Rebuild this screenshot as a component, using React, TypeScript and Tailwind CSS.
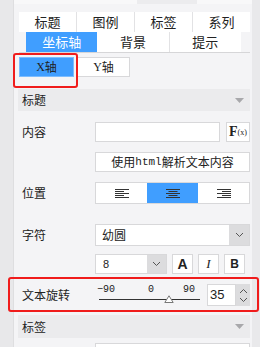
import React from "react";

const cjk = { fontFamily: '"Noto Sans CJK SC", "Noto Sans", sans-serif' };

function AlignIcon({ kind }: { kind: "left" | "center" | "right" }) {
  const lines = [0, 1, 2, 3, 4].map((i) => {
    const long = i % 2 === 0;
    const w = long ? 14 : 9;
    let x = 0;
    if (kind === "center") x = (14 - w) / 2;
    if (kind === "right") x = 14 - w;
    return <rect key={i} x={x} y={i * 2} width={w} height={1} fill="#333" />;
  });
  return (
    <svg width="14" height="9" viewBox="0 0 14 9">
      {lines}
    </svg>
  );
}

function Chevron({ up = false }: { up?: boolean }) {
  return (
    <svg width="9" height="6" viewBox="0 0 9 6">
      <path d={up ? "M1 5 L4.5 1.5 L8 5" : "M1 1 L4.5 4.5 L8 1"} stroke="#555" strokeWidth="1" fill="none" />
    </svg>
  );
}

function DownTri() {
  return (
    <svg width="9" height="5" viewBox="0 0 9 5">
      <path d="M0 0 L9 0 L4.5 5 Z" fill="#a8a8ab" />
    </svg>
  );
}

export default function App() {
  return (
    <div className="relative w-[260px] h-[347px] overflow-hidden flex bg-[#e9e9eb] text-[#222]" style={cjk}>
      <div className="w-[14px] shrink-0 bg-[#e8e8ea] border-r border-[#dedee0]" />
      <div className="w-[238px] shrink-0 bg-[#f4f4f6] flex flex-col *:shrink-0">
        <div className="h-[4px] flex">
          <div className="w-[123px] bg-[#f8f8f9]" />
          <div className="w-[60px] bg-[#ececee]" />
          <div className="flex-1 bg-[#f8f8f9]" />
        </div>
        <div className="h-[8px]" />
        {/* tab row 1 */}
        <div className="ml-[5px] w-[231px] h-[20px] flex bg-white text-[13px] leading-[20px]">
          {["标题", "图例", "标签", "系列"].map((t, i) => (
            <div key={t} className={`flex-1 text-center ${i < 3 ? "border-r border-[#e2e2e4]" : ""}`}>
              {t}
            </div>
          ))}
        </div>
        {/* tab row 2 */}
        <div className="ml-[5px] w-[231px] h-[21px] border-b border-[#d6d6d8]">
          <div className="ml-[7px] w-[215px] h-[20px] flex bg-white text-[13px] leading-[20px]">
            <div className="flex-1 text-center bg-[#409eff] text-white">坐标轴</div>
            <div className="flex-1 text-center border-r border-[#e2e2e4]">背景</div>
            <div className="flex-1 text-center">提示</div>
          </div>
        </div>
        {/* row 3 */}
        <div className="mt-[4px] ml-[5px] h-[20px] flex text-[12px]">
          <div className="w-[55px] h-[20px] bg-[#409eff] border border-[#7cbcff] flex items-center justify-center">
            <span style={{ fontFamily: '"Liberation Serif", serif' }}>X</span>
            <span>轴</span>
          </div>
          <div className="ml-[3px] w-[53px] h-[20px] bg-white border border-[#d8d8da] flex items-center justify-center">
            <span style={{ fontFamily: '"Liberation Serif", serif' }}>Y</span>
            <span>轴</span>
          </div>
        </div>
        {/* panel */}
        <div className="mt-[12px] ml-[4px] w-[232px] flex flex-col text-[12px] *:shrink-0">
          <div className="h-[22px] bg-[#ebebed] flex items-center justify-between pl-[4px] pr-[6px]">
            <span className="text-[12px]">标题</span>
            <DownTri />
          </div>
          {/* 内容 */}
          <div className="mt-[11px] h-[20px] flex items-center">
            <div className="w-[77px] pl-[4px]">内容</div>
            <div className="w-[125px] h-[20px] bg-white border border-[#d8d8da]" />
            <div className="ml-[6px] w-[24px] h-[20px] bg-white border border-[#d8d8da] flex items-center justify-center">
              <span className="font-bold text-[14px] leading-none" style={{ fontFamily: '"Liberation Serif", serif' }}>F</span>
              <span className="text-[8px] leading-none mt-[2px]" style={{ fontFamily: '"Liberation Serif", serif' }}>(x)</span>
            </div>
          </div>
          {/* html button */}
          <div className="mt-[10px] ml-[77px] w-[155px] h-[20px] bg-white border border-[#d8d8da] flex items-center justify-center text-[12px]">
            使用<span style={{ fontFamily: '"Liberation Mono", monospace' }} className="text-[11px]">html</span>解析文本内容
          </div>
          {/* 位置 */}
          <div className="mt-[10px] h-[22px] flex items-center">
            <div className="w-[77px] pl-[4px]">位置</div>
            <div className="w-[155px] h-[22px] bg-white border border-[#d8d8da] flex">
              <div className="flex-1 flex items-center justify-center"><AlignIcon kind="left" /></div>
              <div className="flex-1 flex items-center justify-center bg-[#409eff]"><AlignIcon kind="center" /></div>
              <div className="flex-1 flex items-center justify-center"><AlignIcon kind="right" /></div>
            </div>
          </div>
          {/* 字符 */}
          <div className="mt-[20px] h-[22px] flex items-center">
            <div className="w-[77px] pl-[4px]">字符</div>
            <div className="w-[155px] h-[22px] bg-white border border-[#d8d8da] flex">
              <div className="flex-1 pl-[6px] leading-[20px] text-[12px]">幼圆</div>
              <div className="w-[20px] bg-[#dcdcde] flex items-center justify-center"><Chevron /></div>
            </div>
          </div>
          {/* font size row */}
          <div className="mt-[8px] ml-[77px] h-[20px] flex">
            <div className="w-[72px] h-[20px] bg-white border border-[#d8d8da] flex">
              <div className="flex-1 pl-[7px] leading-[18px] text-[11px]" style={{ fontFamily: '"Liberation Sans", sans-serif' }}>8</div>
              <div className="w-[19px] bg-[#dcdcde] flex items-center justify-center"><Chevron /></div>
            </div>
            <div className="ml-[5px] w-[21px] h-[20px] bg-white border border-[#d8d8da] flex items-center justify-center font-bold text-[14px]" style={{ fontFamily: '"Liberation Sans", sans-serif' }}>A</div>
            <div className="ml-[5px] w-[21px] h-[20px] bg-white border border-[#d8d8da] flex items-center justify-center italic text-[13px]" style={{ fontFamily: '"Liberation Serif", serif' }}>I</div>
            <div className="ml-[5px] w-[21px] h-[20px] bg-white border border-[#d8d8da] flex items-center justify-center font-bold text-[12px]" style={{ fontFamily: '"Liberation Sans", sans-serif' }}>B</div>
          </div>
          {/* rotate row */}
          <div className="mt-[4px] h-[34px] flex items-center">
            <div className="w-[77px] pl-[4px] text-[12px]">文本旋转</div>
            <div className="relative w-[112px] h-[34px]" style={{ fontFamily: '"Liberation Mono", monospace' }}>
              <span className="absolute left-[2px] top-[6px] text-[10px] leading-[12px]">−90</span>
              <span className="absolute left-[53px] top-[6px] text-[10px] leading-[12px]">0</span>
              <span className="absolute left-[88px] top-[6px] text-[10px] leading-[12px]">90</span>
              <div className="absolute left-[4px] top-[21px] w-[101px] h-[1px] bg-[#333]" />
              <svg className="absolute left-[69px] top-[17px]" width="10" height="8" viewBox="0 0 10 8">
                <path d="M5 0.8 L9.2 7.5 L0.8 7.5 Z" fill="#fff" stroke="#777" strokeWidth="1" />
              </svg>
            </div>
            <div className="w-[29px] h-[22px] bg-white border border-[#d8d8da] flex items-center pl-[2px] text-[13px]" style={{ fontFamily: '"Liberation Sans", sans-serif' }}>35</div>
            <div className="w-[14px] h-[22px] bg-[#dcdcde] flex flex-col items-center justify-center gap-[3px]">
              <Chevron up />
              <Chevron />
            </div>
          </div>
          {/* 标签 header */}
          <div className="mt-[3px] h-[23px] bg-[#ebebed] flex items-center justify-between pl-[4px] pr-[6px]">
            <span className="text-[12px]">标签</span>
            <DownTri />
          </div>
          <div className="mt-[5px] ml-[77px] w-[155px] h-[20px] bg-white border border-[#d8d8da]" />
        </div>
      </div>
      {/* red highlight boxes */}
      <div className="absolute left-[13px] top-[53px] w-[65px] h-[35px] border-2 border-[#f01c1c] rounded-[3px]" />
      <div className="absolute left-[8px] top-[277px] w-[251px] h-[35px] border-2 border-[#f01c1c] rounded-[3px]" />
    </div>
  );
}
